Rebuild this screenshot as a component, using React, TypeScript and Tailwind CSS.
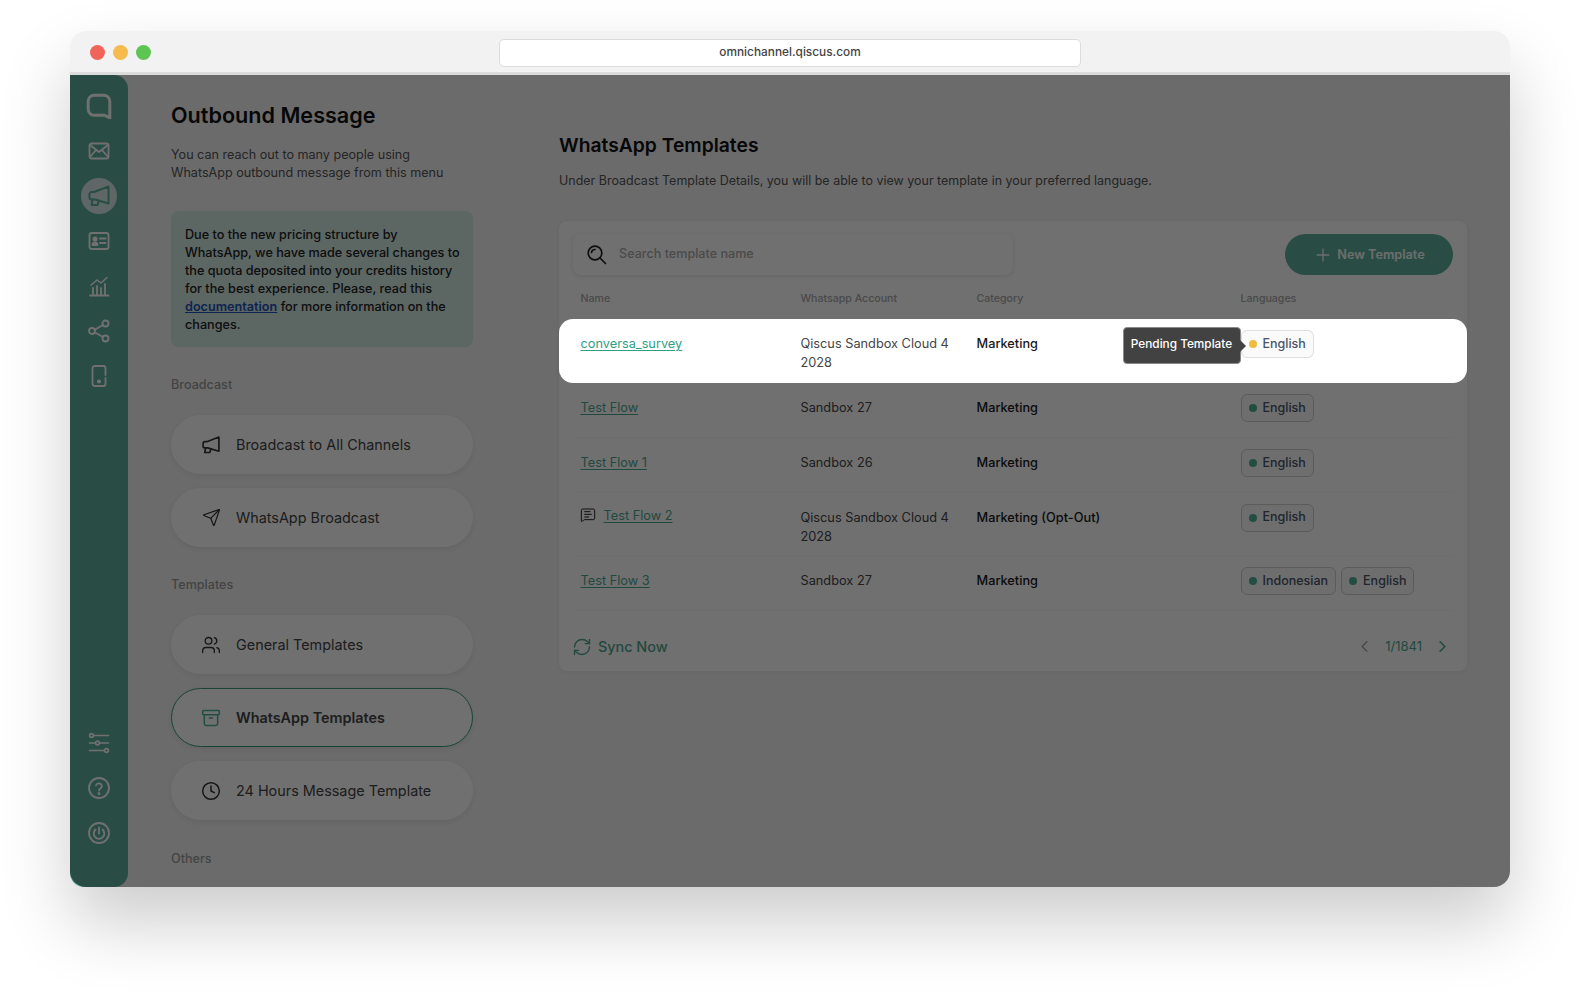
import React from "react";
import { Send, Users, Archive, Clock, RefreshCw, MessageSquareText, Plus, ChevronLeft, ChevronRight } from "lucide-react";

const Svg = ({ children, size = 24, className = "" }: { children: React.ReactNode; size?: number; className?: string }) => (
  <svg width={size} height={size} viewBox="0 0 24 24" fill="none" stroke="currentColor" strokeWidth="1.8" strokeLinecap="round" strokeLinejoin="round" className={`shrink-0 ${className}`}>
    {children}
  </svg>
);

const LogoIcon = () => (
  <Svg size={26}>
    <path strokeWidth="2.7" d="M7.5 2h9a5.5 5.5 0 0 1 5.5 5.5V23l-5-2.5H7.5A5.5 5.5 0 0 1 2 15V7.5A5.5 5.5 0 0 1 7.5 2z" />
  </Svg>
);
const MailIcon = () => (
  <Svg>
    <rect x="2.5" y="4.5" width="19" height="15" rx="2" />
    <path d="M3 6l9 7 9-7M3 18l6-7M21 18l-6-7" />
  </Svg>
);
const Megaphone = ({ size = 24, sw = 1.8 }: { size?: number; sw?: number }) => (
  <Svg size={size}>
    <g strokeWidth={sw}>
      <path d="M21.5 2.5v17L8 15.5H4.5a2 2 0 0 1-2-2V10a2 2 0 0 1 2-2H7z" />
      <path d="M5.5 15.5l-1 5.5h6l1.5-4.5" />
    </g>
  </Svg>
);
const CardIcon = () => (
  <Svg>
    <rect x="2.5" y="4" width="19" height="16" rx="2" />
    <circle cx="8" cy="10" r="1.6" fill="currentColor" />
    <path d="M5.5 16c0-1.8 1-2.7 2.5-2.7s2.5.9 2.5 2.7z" fill="currentColor" />
    <path d="M13 9.5h5.5M13 14h5.5" />
  </Svg>
);
const ChartIcon = () => (
  <Svg>
    <path d="M3 21.5h18.5M6 21v-7M10 21v-9M14 21v-7M18 21V10" />
    <path d="M4 11l6-5 4 3 6-5.5" strokeWidth="1.5" />
  </Svg>
);
const ShareIcon = () => (
  <Svg>
    <circle cx="5" cy="12" r="3" />
    <circle cx="18.5" cy="4.5" r="3" />
    <circle cx="18.5" cy="19.5" r="3" />
    <path d="M7.7 10.7l8.2-4.7M7.7 13.3l8.2 4.7" />
  </Svg>
);
const PhoneIcon = () => (
  <Svg>
    <path d="M18.5 14v6a2 2 0 0 1-2 2h-9a2 2 0 0 1-2-2V4a2 2 0 0 1 2-2h9a2 2 0 0 1 2 2v7" />
    <circle cx="12" cy="17.5" r="1.2" fill="currentColor" />
  </Svg>
);
const SlidersIcon = () => (
  <Svg>
    <path d="M6.5 4.5h15M2.5 12h5.5M13 12h8.5M2.5 19.5h14.5" strokeWidth="1.6" />
    <circle cx="4.5" cy="4.5" r="1.9" strokeWidth="1.6" />
    <circle cx="10.5" cy="12" r="1.9" strokeWidth="1.6" />
    <circle cx="19.5" cy="19.5" r="1.9" strokeWidth="1.6" />
  </Svg>
);
const HelpIcon = () => (
  <Svg>
    <circle cx="12" cy="12" r="10" />
    <path d="M9 9.3a3 3 0 0 1 5.8 1c0 2-2.8 2.4-2.8 4.2" />
    <circle cx="12" cy="17.6" r=".6" fill="currentColor" />
  </Svg>
);
const PowerIcon = () => (
  <Svg>
    <circle cx="12" cy="12" r="10" />
    <path d="M8.5 8.5a5.3 5.3 0 1 0 7 0M12 6.5v6" />
  </Svg>
);
const SearchIcon = () => (
  <svg width="20" height="20" viewBox="0 0 20 20" fill="none" stroke="currentColor" strokeWidth="1.7" strokeLinecap="round">
    <circle cx="8" cy="8" r="6.8" />
    <path d="M4.5 7.5a3.5 3.5 0 0 1 3.5-3" />
    <path d="M13 13l5.5 5.5" />
  </svg>
);

const NavSlot = ({ children, active }: { children: React.ReactNode; active?: boolean }) => (
  <div className={`flex h-9 w-9 items-center justify-center rounded-full ${active ? "bg-white/75 text-[#5cb09a]" : "text-white"}`}>{children}</div>
);

const Tile = ({ icon, label, active }: { icon: React.ReactNode; label: string; active?: boolean }) => (
  <div className={`flex h-[59px] w-[302px] items-center gap-[16px] rounded-[30px] bg-white shadow-[0_2px_6px_rgba(0,0,0,0.08)] ${active ? "border border-[#3a9a80] pl-[30px] font-semibold" : "pl-[31px]"}`}>
    <span className={`flex h-[18px] w-[18px] items-center justify-center ${active ? "text-[#4fb096]" : "text-[#333]"}`}>{icon}</span>
    <span className="text-[14.4px] text-[#444]">{label}</span>
  </div>
);

const Heading = ({ children, className = "" }: { children: React.ReactNode; className?: string }) => (
  <div className={`text-[12.6px] font-medium leading-[16px] text-[#9a9a9a] ${className}`}>{children}</div>
);

const Chip = ({ label, pending }: { label: string; pending?: boolean }) => (
  <span className={`inline-flex h-[28px] items-center gap-[6px] rounded-[6px] border px-[7px] text-[12.5px] font-medium text-[#4b5568] ${pending ? "border-[#dedede] bg-[#fafafa]" : "border-[#cfcfcf] bg-[#fbfbfb]"}`}>
    <span className={`h-[8px] w-[8px] rounded-full ${pending ? "bg-[#f0bb3f]" : "bg-[#4fb096]"}`} />
    {label}
  </span>
);

const Row = ({ name, account, cat, langs, h, flow, hi, tooltip }: { name: string; account: React.ReactNode; cat: string; langs: string[]; h: string; flow?: boolean; hi?: boolean; tooltip?: boolean }) => (
  <div className={`${h} grid grid-cols-[220px_176px_264px_1fr] ${hi ? "relative z-20 -mx-[14px] rounded-[14px] bg-white px-[21.5px]" : "border-b border-[#f8f8f8] px-[7.5px]"}`}>
    <div className={`flex items-start gap-[8px] ${flow ? "pt-[13px]" : "pt-[15px]"} text-[12.75px] leading-[19px]`}>
      {flow && <MessageSquareText size={16} strokeWidth={1.5} className="mt-[1px] -ml-[1px] text-[#222]" />}
      <span className={`underline underline-offset-2 ${hi ? "text-[#2fa084]" : "text-[#4fa68f]"}`}>{name}</span>
    </div>
    <div className="pt-[15px] pr-[8px] text-[12.75px] leading-[19px] text-[#444]">{account}</div>
    <div className="pt-[15px] text-[12.75px] font-medium leading-[19px] text-[#1a1a1a]">{cat}</div>
    <div className="relative flex items-start gap-[5px] pt-[11px]">
      {tooltip && (
        <div className="absolute top-[7.5px] -left-[118px] flex h-[37px] w-[118px] items-center justify-center rounded-[4px] border border-[#8a8a8a] bg-[#424242] text-[11.8px] font-medium text-white">
          Pending Template
          <span className="absolute top-[12px] -right-[6px] h-0 w-0 border-y-[6px] border-l-[6px] border-y-transparent border-l-[#424242]" />
        </div>
      )}
      {langs.map((l) => (
        <Chip key={l} label={l} pending={tooltip} />
      ))}
    </div>
  </div>
);

export default function App() {
  return (
    <div className="h-[996px] w-[1580px] overflow-hidden bg-white pl-[70px] pt-[31px] font-['Inter',sans-serif]">
      <div className="relative flex h-[856px] w-[1440px] flex-col rounded-[16px] bg-white shadow-[0_36px_70px_rgba(0,0,0,0.2)]">
        <div className="flex h-[44px] shrink-0 items-center rounded-t-[16px] border-b-[3px] border-[#dcdcdc] bg-[#f2f2f2] pt-[2px]">
          <div className="flex gap-[8px] pl-[20px]">
            <span className="h-[15px] w-[15px] rounded-full bg-[#f0645a]" />
            <span className="h-[15px] w-[15px] rounded-full bg-[#f6bb4e]" />
            <span className="h-[15px] w-[15px] rounded-full bg-[#5ec453]" />
          </div>
          <div className="ml-[348px] flex h-[28px] w-[582px] items-center justify-center rounded-[5px] border border-[#dcdcdc] bg-white text-[11.85px] font-medium text-[#444]">omnichannel.qiscus.com</div>
        </div>

        <div className="relative flex min-h-0 flex-1 rounded-b-[16px] bg-[#f3f3f3]">
          <aside className="flex w-[58px] shrink-0 flex-col items-center justify-between rounded-[14px] rounded-tl-none bg-[#5fb09c] pb-[36px] pt-[13px]">
            <div className="flex flex-col items-center gap-[9px]">
              <NavSlot><LogoIcon /></NavSlot>
              <NavSlot><MailIcon /></NavSlot>
              <NavSlot active><Megaphone size={24} sw={2} /></NavSlot>
              <NavSlot><CardIcon /></NavSlot>
              <NavSlot><ChartIcon /></NavSlot>
              <NavSlot><ShareIcon /></NavSlot>
              <NavSlot><PhoneIcon /></NavSlot>
            </div>
            <div className="flex flex-col items-center gap-[9px]">
              <NavSlot><SlidersIcon /></NavSlot>
              <NavSlot><HelpIcon /></NavSlot>
              <NavSlot><PowerIcon /></NavSlot>
            </div>
          </aside>

          <section className="w-[389px] shrink-0 overflow-hidden bg-[#f4f4f4] pl-[43px] pt-[26px]">
            <h1 className="text-[21.6px] font-semibold leading-[28px] text-[#111]">Outbound Message</h1>
            <p className="mt-[17px] text-[12.6px] leading-[18px] text-[#555]">You can reach out to many people using<br />WhatsApp outbound message from this menu</p>
            <div className="mt-[29px] h-[136px] w-[302px] rounded-[8px] bg-[#d2e8e2] pl-[14px] pr-[12px] pt-[15px] text-[12.65px] font-medium leading-[18px] text-[#222]">
              Due to the new pricing structure by WhatsApp, we have made several changes to the quota deposited into your credits history for the best experience. Please, read this <a className="font-semibold text-[#2350b8] underline">documentation</a> for more information on the changes.
            </div>
            <Heading className="mt-[30px]">Broadcast</Heading>
            <div className="mt-[22px] flex flex-col gap-[14px]">
              <Tile label="Broadcast to All Channels" icon={<Megaphone size={20} sw={2} />} />
              <Tile label="WhatsApp Broadcast" icon={<Send size={19} strokeWidth={1.6} className="shrink-0" />} />
            </div>
            <Heading className="mt-[30px]">Templates</Heading>
            <div className="mt-[22px] flex flex-col gap-[14px]">
              <Tile label="General Templates" icon={<Users size={20} strokeWidth={1.6} className="shrink-0" />} />
              <Tile active label="WhatsApp Templates" icon={<Archive size={20} strokeWidth={1.8} className="shrink-0" />} />
              <Tile label="24 Hours Message Template" icon={<Clock size={20} strokeWidth={1.8} className="shrink-0" />} />
            </div>
            <Heading className="mt-[31px]">Others</Heading>
          </section>

          <main className="min-w-0 flex-1 pl-[42px] pr-[43px] pt-[56px]">
            <h2 className="text-[19.3px] font-semibold leading-[28px] text-[#111]">WhatsApp Templates</h2>
            <p className="mt-[13px] text-[12.47px] leading-[18px] text-[#555]">Under Broadcast Template Details, you will be able to view your template in your preferred language.</p>
            <div className="mt-[31px] h-[450px] w-[908px] rounded-[8px] bg-white px-[14px] pt-[13px] shadow-[0_1px_4px_rgba(0,0,0,0.06)]">
              <div className="flex items-center justify-between">
                <div className="flex h-[41px] w-[440px] items-center gap-[12px] rounded-[8px] bg-white pl-[14px] shadow-[0_1px_5px_rgba(0,0,0,0.12)]">
                  <span className="text-[#222]"><SearchIcon /></span>
                  <span className="text-[12.6px] font-medium text-[#aaa]">Search template name</span>
                </div>
                <button className="flex h-[41px] w-[168px] items-center justify-center gap-[4px] rounded-full bg-[#5fb09c] text-[12.7px] font-semibold text-[#f6f9f8]">
                  <Plus size={20} strokeWidth={1.6} />
                  New Template
                </button>
              </div>
              <div className="grid grid-cols-[220px_176px_264px_1fr] px-[7.5px] pt-[16px] text-[10.6px] font-medium leading-[16px] text-[#a8a8a8]">
                <span>Name</span>
                <span>Whatsapp Account</span>
                <span>Category</span>
                <span>Languages</span>
              </div>
              <div className="mt-[12px]">
                <Row hi tooltip h="h-[64px]" name="conversa_survey" account={<>Qiscus Sandbox Cloud 4<br />2028</>} cat="Marketing" langs={["English"]} />
                <Row h="h-[55px]" name="Test Flow" account="Sandbox 27" cat="Marketing" langs={["English"]} />
                <Row h="h-[54.5px]" name="Test Flow 1" account="Sandbox 26" cat="Marketing" langs={["English"]} />
                <Row flow h="h-[63.5px]" name="Test Flow 2" account={<>Qiscus Sandbox Cloud 4<br />2028</>} cat="Marketing (Opt-Out)" langs={["English"]} />
                <Row h="h-[55px]" name="Test Flow 3" account="Sandbox 27" cat="Marketing" langs={["Indonesian", "English"]} />
              </div>
              <div className="mt-[25px] flex items-center justify-between">
                <div className="flex items-center gap-[6px] text-[14.4px] font-medium text-[#4fa68f]">
                  <RefreshCw size={20} strokeWidth={1.6} className="-ml-[1px]" />
                  Sync Now
                </div>
                <div className="flex items-center gap-[11px] pr-[1px] text-[13px] text-[#4fa68f]">
                  <ChevronLeft size={19} strokeWidth={2} className="text-[#aaa]" />
                  <span>1/1841</span>
                  <ChevronRight size={19} strokeWidth={2} />
                </div>
              </div>
            </div>
          </main>

          <div className="absolute inset-0 z-10 rounded-b-[16px] bg-black/56" />
        </div>
      </div>
    </div>
  );
}
